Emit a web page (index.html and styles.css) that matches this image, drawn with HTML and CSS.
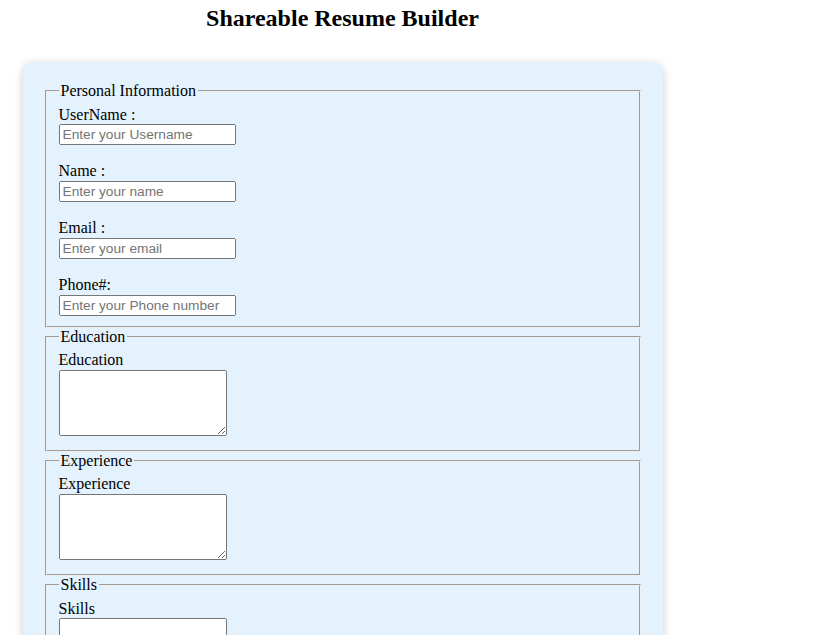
FILE: index.html
```html
<!DOCTYPE html>
<html lang="en">
<head>
<meta charset="utf-8">
<title>Shareable Resume Builder</title>
<link rel="stylesheet" href="styles.css">
</head>
<body>
<div class="page">
  <h1 class="title">Shareable Resume Builder</h1>
  <div class="card">
    <form class="resume-form">
      <fieldset class="section">
        <legend class="section-legend">Personal Information</legend>
        <div class="field">
          <label class="field-label" for="username">UserName :</label>
          <input class="text-input" type="text" id="username" placeholder="Enter your Username">
        </div>
        <div class="field">
          <label class="field-label" for="name">Name :</label>
          <input class="text-input" type="text" id="name" placeholder="Enter your name">
        </div>
        <div class="field">
          <label class="field-label" for="email">Email :</label>
          <input class="text-input" type="email" id="email" placeholder="Enter your email">
        </div>
        <div class="field">
          <label class="field-label" for="phone">Phone#:</label>
          <input class="text-input" type="tel" id="phone" placeholder="Enter your Phone number">
        </div>
      </fieldset>
      <fieldset class="section">
        <legend class="section-legend">Education</legend>
        <label class="field-label" for="education">Education</label>
        <textarea class="text-area" id="education"></textarea>
      </fieldset>
      <fieldset class="section">
        <legend class="section-legend">Experience</legend>
        <label class="field-label" for="experience">Experience</label>
        <textarea class="text-area" id="experience"></textarea>
      </fieldset>
      <fieldset class="section">
        <legend class="section-legend">Skills</legend>
        <label class="field-label" for="skills">Skills</label>
        <textarea class="text-area" id="skills"></textarea>
      </fieldset>
      <div class="actions">
        <button class="submit-btn" type="submit">Generate Resume</button>
      </div>
    </form>
  </div>
</div>
</body>
</html>
```
FILE: styles.css
```css
body {
  margin: 0;
  font-family: "Liberation Serif", "Times New Roman", serif;
  font-size: 16px;
  color: #000;
  background: #fff;
}

.page {
  width: 685px;
}

.title {
  margin: 5px 0 0;
  font-size: 24px;
  font-weight: bold;
  line-height: normal;
  text-align: center;
}

.card {
  max-width: 600px;
  margin: 30px auto 20px;
  padding: 20px;
  background: #e3f2fd;
  border-radius: 10px;
  box-shadow: 0 2px 10px rgba(0, 0, 0, 0.2);
}

.resume-form {
  margin: 0;
}

.section {
  margin: 0 2px;
  padding: 0.35em 0.75em 0.625em;
}

.section-legend {
  padding: 0 2px;
  line-height: 18px;
}

.field {
  display: flex;
  flex-direction: column;
  align-items: flex-start;
  margin-bottom: 17.4px;
}

.field:last-child {
  margin-bottom: 0;
}

.field-label {
  display: block;
  line-height: 18.5px;
}

.text-input {
  display: block;
  box-sizing: border-box;
  width: 177px;
  height: 21px;
  margin: 0;
  padding: 1px 2px;
  font-family: "Liberation Sans", Arial, sans-serif;
  font-size: 13.7px;
}

.text-area {
  display: block;
  box-sizing: border-box;
  width: 168px;
  height: 66px;
  margin: 0 0 4px;
}

.actions {
  padding-top: 12px;
}

.submit-btn {
  font-family: "Liberation Sans", Arial, sans-serif;
  font-size: 13.333px;
}
```
